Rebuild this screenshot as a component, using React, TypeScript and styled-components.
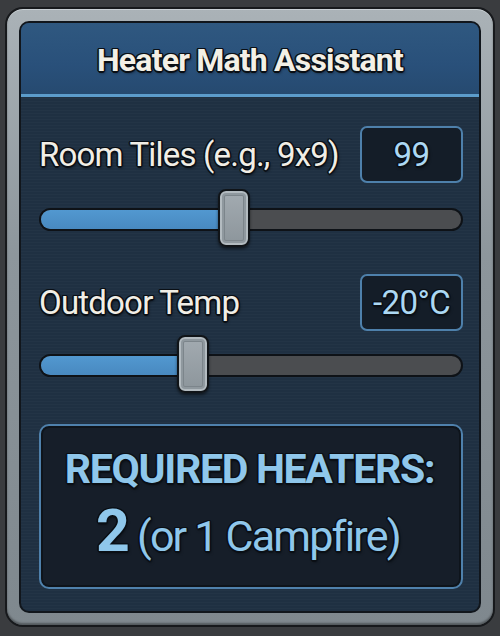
import React, { useState } from "react";
import styled, { createGlobalStyle } from "styled-components";

const GlobalStyle = createGlobalStyle`
  html, body {
    margin: 0;
    padding: 0;
    background: #3a3c3f;
  }
  body {
    font-family: Roboto, "Liberation Sans", sans-serif;
  }
`;

const outline = `
  -1.5px 0 #0a0f15, 1.5px 0 #0a0f15, 0 -1.5px #0a0f15, 0 1.5px #0a0f15,
  -1px -1px #0a0f15, 1px 1px #0a0f15, -1px 1px #0a0f15, 1px -1px #0a0f15,
  1px 2px 3px rgba(0, 0, 0, 0.6)
`;

const Page = styled.div`
  padding: 7px 5px 9px;
`;

const Frame = styled.div`
  box-sizing: border-box;
  width: 490px;
  height: 620px;
  padding: 12px;
  border: 2px solid #17191c;
  border-radius: 18px;
  background: linear-gradient(180deg, #aab2b7 0%, #8d969c 40%, #7f888e 100%);
  box-shadow: inset 0 1px 0 #c9d0d4, inset 0 -2px 2px rgba(0, 0, 0, 0.35);
  display: flex;
`;

const Panel = styled.div`
  flex: 1;
  display: flex;
  flex-direction: column;
  border: 2px solid #11161c;
  border-radius: 10px;
  overflow: hidden;
  background: #1f3042
    repeating-linear-gradient(
      180deg,
      rgba(255, 255, 255, 0.018) 0 1px,
      rgba(0, 0, 0, 0) 1px 3px
    );
`;

const Header = styled.div`
  height: 71px;
  flex: none;
  display: flex;
  align-items: center;
  justify-content: center;
  background: linear-gradient(180deg, #2f5880 0%, #29507a 60%, #264a70 100%);
  border-bottom: 3px solid #5c9ccb;
`;

const Title = styled.h1`
  margin: 2px 0 0;
  font-size: 32px;
  font-weight: 700;
  letter-spacing: -0.8px;
  color: #f3f0e6;
  text-shadow: ${outline};
`;

const Body = styled.div`
  flex: 1;
  display: flex;
  flex-direction: column;
  padding: 29px 16px 0 18px;
`;

const Row = styled.div<{ $gap: number }>`
  display: flex;
  align-items: center;
  justify-content: space-between;
  margin-top: ${(p) => p.$gap}px;
`;

const Label = styled.span`
  font-size: 33px;
  font-weight: 400;
  letter-spacing: -0.8px;
  color: #f1eee6;
  text-shadow: ${outline};
`;

const ValueBox = styled.div`
  box-sizing: border-box;
  width: 103px;
  height: 57px;
  display: flex;
  align-items: center;
  justify-content: center;
  border: 2px solid #4e80ab;
  border-radius: 7px;
  background: #141d28;
  font-size: 33px;
  letter-spacing: -0.6px;
  color: #acd8f3;
  text-shadow: ${outline};
`;

const Slider = styled.div<{ $gap: number }>`
  position: relative;
  height: 60px;
  margin-top: ${(p) => p.$gap}px;
  display: flex;
  align-items: center;
`;

const Track = styled.div`
  box-sizing: border-box;
  width: 100%;
  height: 23px;
  border: 2px solid #0e1217;
  border-radius: 12px;
  background: #4b4d50;
  overflow: hidden;
`;

const Fill = styled.div`
  height: 100%;
  background: linear-gradient(180deg, #5298d0 0%, #4889c0 100%);
`;

const Thumb = styled.div`
  position: absolute;
  top: 0;
  box-sizing: border-box;
  width: 32px;
  height: 58px;
  border: 2px solid #101418;
  border-radius: 8px;
  background: linear-gradient(180deg, #a3abb1 0%, #8c959b 100%);
  box-shadow: inset 0 0 0 2px #b3bbc0, inset 0 0 0 4px #8f989e,
    inset 0 0 0 5px #7c858b, 0 2px 3px rgba(0, 0, 0, 0.5);
`;

const Result = styled.div`
  box-sizing: border-box;
  height: 165px;
  margin-top: 29px;
  display: flex;
  flex-direction: column;
  align-items: center;
  border: 2px solid #4f81ac;
  border-radius: 10px;
  background: #161e29;
  box-shadow: inset 0 0 0 2px #0e141b;
  color: #8fc7eb;
  text-shadow: ${outline};
`;

const ResultHeading = styled.div`
  margin-top: 20px;
  margin-left: -3px;
  font-size: 41px;
  font-weight: 700;
  letter-spacing: -1.3px;
  line-height: 46px;
`;

const ResultLine = styled.div`
  margin-top: 8px;
  margin-left: -6px;
  display: flex;
  align-items: baseline;
  gap: 8px;
  line-height: 62px;
`;

const Count = styled.span`
  font-size: 59px;
  font-weight: 700;
  letter-spacing: -1px;
`;

const Alt = styled.span`
  font-size: 43px;
  font-weight: 400;
  letter-spacing: -1.8px;
`;

interface RangeProps {
  value: number;
  min: number;
  max: number;
  gap: number;
}

const Range: React.FC<RangeProps> = ({ value, min, max, gap }) => {
  const pct = ((value - min) / (max - min)) * 100;
  return (
    <Slider $gap={gap}>
      <Track>
        <Fill style={{ width: `${pct}%` }} />
      </Track>
      <Thumb style={{ left: `calc(${pct}% - 16px)` }} />
    </Slider>
  );
};

// rough rule: one heater per ~70 tiles of load, colder air adds load
const heatersFor = (tiles: number, temp: number) => {
  const load = tiles * (1 + Math.max(0, -temp) / 40);
  return Math.max(1, Math.round(load / 70));
};

const App: React.FC = () => {
  const [tiles] = useState(99);
  const [temp] = useState(-20);
  const heaters = heatersFor(tiles, temp);
  const campfires = Math.max(1, Math.floor(heaters / 2));

  return (
    <Page>
      <GlobalStyle />
      <Frame>
        <Panel>
          <Header>
            <Title>Heater Math Assistant</Title>
          </Header>
          <Body>
            <Row $gap={0}>
              <Label>Room Tiles (e.g., 9x9)</Label>
              <ValueBox>{tiles}</ValueBox>
            </Row>
            <Range value={tiles} min={9} max={205} gap={6} />
            <Row $gap={25}>
              <Label>Outdoor Temp</Label>
              <ValueBox>{temp}°C</ValueBox>
            </Row>
            <Range value={temp} min={-60} max={50} gap={4} />
            <Result>
              <ResultHeading>REQUIRED HEATERS:</ResultHeading>
              <ResultLine>
                <Count>{heaters}</Count>
                <Alt>(or {campfires} Campfire)</Alt>
              </ResultLine>
            </Result>
          </Body>
        </Panel>
      </Frame>
    </Page>
  );
};

export default App;
